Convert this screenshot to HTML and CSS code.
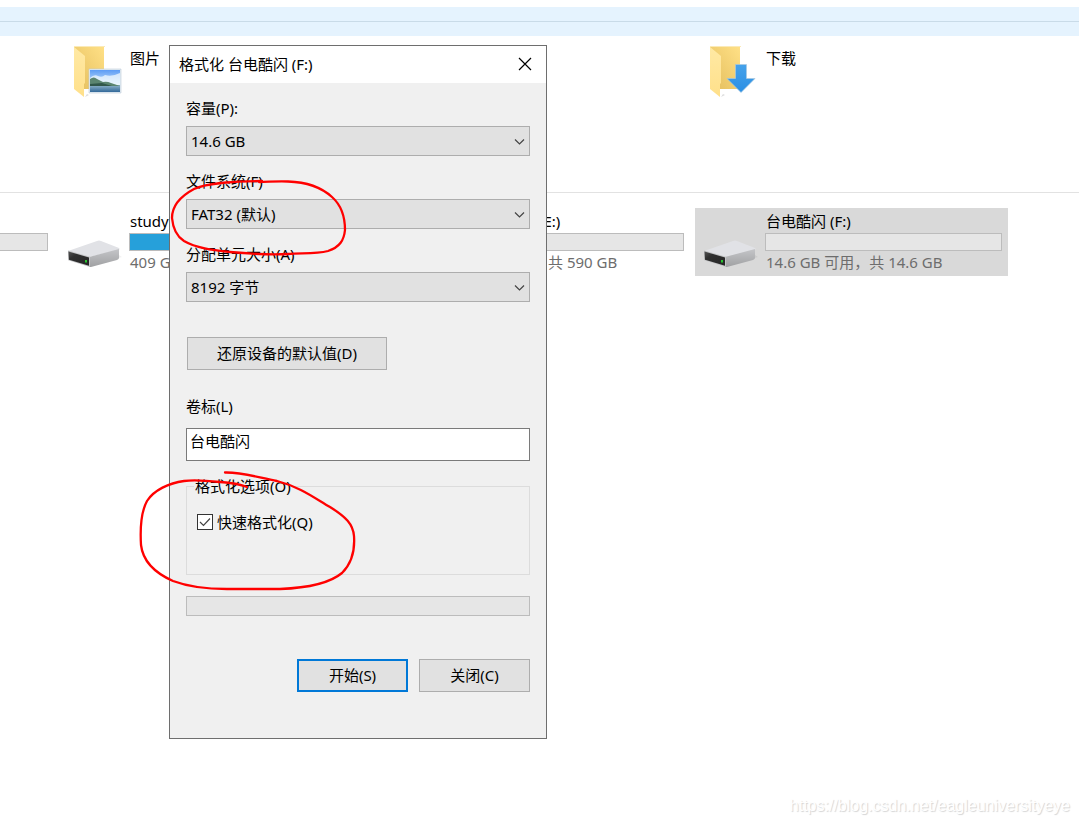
FILE: index.html
```html
<!DOCTYPE html>
<html lang="zh-CN">
<head>
<meta charset="utf-8">
<title>格式化 台电酷闪 (F:)</title>
<link rel="stylesheet" href="styles.css">
</head>
<body>
<svg class="defs" aria-hidden="true">
  <defs>
    <linearGradient id="folder-back" x1="0" y1="1" x2="1" y2="0"><stop offset="0" stop-color="#e3bd5c"/><stop offset="1" stop-color="#ffe086"/></linearGradient>
    <linearGradient id="folder-front" x1="0" y1="0" x2="0" y2="1"><stop offset="0" stop-color="#ffe9a4"/><stop offset="1" stop-color="#ffe08a"/></linearGradient>
    <linearGradient id="sky" x1="0" y1="0" x2="0" y2="1"><stop offset="0" stop-color="#5c9cf5"/><stop offset="1" stop-color="#d9eefb"/></linearGradient>
    <linearGradient id="sea" x1="0" y1="0" x2="0" y2="1"><stop offset="0" stop-color="#8fb4c8"/><stop offset="1" stop-color="#34699a"/></linearGradient>
    <linearGradient id="arrow" x1="0" y1="0" x2="0" y2="1"><stop offset="0" stop-color="#46a2ea"/><stop offset="1" stop-color="#2b8fe4"/></linearGradient>
    <linearGradient id="drive-side" x1="0" y1="0" x2="0" y2="1"><stop offset="0" stop-color="#c4c5c8"/><stop offset="1" stop-color="#a0a1a3"/></linearGradient>
    <linearGradient id="drive-front" x1="0" y1="0" x2="1" y2="1"><stop offset="0" stop-color="#555"/><stop offset=".3" stop-color="#303030"/><stop offset="1" stop-color="#262626"/></linearGradient>
    <symbol id="folder" viewBox="0 0 56 56">
      <path d="M14 53l4-2-2-1z" fill="#ddd"/>
      <path d="M3 3h30v42H11z" fill="url(#folder-back)"/>
      <path d="M3 2h31v1H3z" fill="#fbeab8"/>
      <path d="M3 3l11 9v27l-1 1v13L3 45z" fill="url(#folder-front)"/>
    </symbol>
    <symbol id="drive" viewBox="0 0 56 56">
      <path d="M30 54l26-8-3-2-25 8z" fill="#000" opacity=".06"/>
      <path d="M2 40l29-10q2-1 4 0l18 7q1 1 0 2L23 46z" fill="#e1e2e6"/>
      <path d="M23 46l30-8v9q0 1-2 2l-26 7h-2z" fill="url(#drive-side)"/>
      <path d="M2 39.500l22 6.200V56L3 49.500q-1 0-1-1z" fill="#c3c4c6"/>
      <path d="M2.500 40.500L23 46.500v8.200L3 48.700z" fill="url(#drive-front)"/>
      <path d="M19 49h2v2.500h-2z" fill="#27c52f"/>
    </symbol>
  </defs>
</svg>

<main class="explorer">
  <div class="group-band"></div>
  <section class="tiles tiles-folders">
    <div class="tile tile-pictures">
      <svg class="tile-icon" viewBox="0 0 56 56" aria-hidden="true">
        <use href="#folder"/>
        <path d="M18 25h32v24H18z" fill="#e3edf4" stroke="#bccbd6" stroke-width=".6"/>
        <path d="M19 26h30v16H19z" fill="url(#sky)"/>
        <path d="M19 34q4-4 8-2t7-1q7 2 15-2v13H19z" fill="#f2f9fd" opacity=".75"/>
        <path d="M19 41h30v7H19z" fill="url(#sea)"/>
        <path d="M19 35q4-3 7 0l6 3q4-1 8 1l9 3H19z" fill="#5b8570"/>
        <path d="M19 40l12-1 10 3H19z" fill="#31574a"/>
      </svg>
      <div class="tile-text"><span class="tile-name">图片</span></div>
    </div>
    <div class="tile tile-downloads">
      <svg class="tile-icon" viewBox="0 0 56 56" aria-hidden="true">
        <use href="#folder"/>
        <path d="M28.500 20.500h11v14h8.500L34 48.500 20 34.500h8.500z" fill="url(#arrow)" stroke="#a9c9df" stroke-width=".7"/>
      </svg>
      <div class="tile-text"><span class="tile-name">下载</span></div>
    </div>
  </section>
  <section class="tiles tiles-drives">
    <div class="tile tile-edge"><div class="tile-text"><progress class="usage" value="0" max="100" aria-label="已用空间"></progress></div></div>
    <div class="tile">
      <svg class="tile-icon" aria-hidden="true"><use href="#drive"/></svg>
      <div class="tile-text">
        <span class="tile-name">study</span>
        <progress class="usage" value="50" max="100" aria-label="study"></progress>
        <span class="tile-info">409 GB</span>
      </div>
    </div>
    <div class="tile tile-covered">
      <div class="tile-text">
        <span class="tile-name">(E:)</span>
        <progress class="usage" value="0" max="100" aria-label="E:"></progress>
        <span class="tile-info">共 590 GB</span>
      </div>
    </div>
    <div class="tile tile-selected">
      <svg class="tile-icon" aria-hidden="true"><use href="#drive"/></svg>
      <div class="tile-text">
        <span class="tile-name">台电酷闪 (F:)</span>
        <progress class="usage" value="0" max="100" aria-label="台电酷闪 (F:)"></progress>
        <span class="tile-info">14.6 GB 可用，共 14.6 GB</span>
      </div>
    </div>
  </section>
</main>

<form class="dialog" role="dialog" aria-labelledby="dialog-title">
  <header class="titlebar">
    <h1 class="title" id="dialog-title">格式化 台电酷闪 (F:)</h1>
    <button class="close" type="button" aria-label="关闭"><svg width="14" height="14" viewBox="0 0 14 14"><path d="M1 1l12 12M13 1L1 13" stroke="#000" stroke-width="1.200"/></svg></button>
  </header>
  <div class="dialog-body">
    <div class="fields">
      <div class="field">
        <label for="capacity">容量(P):</label>
        <div class="combo"><select id="capacity"><option>14.6 GB</option></select><svg class="chevron" viewBox="0 0 11 6"><path d="M1 .5L5.500 5 10 .5"/></svg></div>
      </div>
      <div class="field">
        <label for="filesystem">文件系统(F)</label>
        <div class="combo"><select id="filesystem"><option>FAT32 (默认)</option></select><svg class="chevron" viewBox="0 0 11 6"><path d="M1 .5L5.500 5 10 .5"/></svg></div>
      </div>
      <div class="field">
        <label for="allocation">分配单元大小(A)</label>
        <div class="combo"><select id="allocation"><option>8192 字节</option></select><svg class="chevron" viewBox="0 0 11 6"><path d="M1 .5L5.500 5 10 .5"/></svg></div>
      </div>
    </div>
    <button class="button restore" type="button">还原设备的默认值(D)</button>
    <div class="field field-volume">
      <label for="volume">卷标(L)</label>
      <input class="textbox" id="volume" type="text" value="台电酷闪">
    </div>
    <fieldset class="options">
      <legend>格式化选项(O)</legend>
      <label class="check">
        <span class="check-box"><input type="checkbox" checked><svg class="tick" viewBox="0 0 16 16"><path d="M3 8l3.500 3.500L13 4.500"/></svg></span>快速格式化(Q)
      </label>
    </fieldset>
    <progress class="format-progress" value="0" max="100" aria-label="格式化进度"></progress>
    <div class="actions">
      <button class="button button-default" type="button">开始(S)</button>
      <button class="button" type="button">关闭(C)</button>
    </div>
  </div>
</form>

<svg class="ink" width="380" height="600" viewBox="0 0 380 600" aria-hidden="true">
  <path d="M262 181C238 181 206 183 194 189C181 196 172 206 172 218C173 229 176 236 184 241C196 248 212 250 230 252C252 254 272 255 288 254C304 253 316 254 328 251C340 247 344 240 345 230C345 216 341 205 332 197C321 187 305 182 288 181.500C276 181 268 182 259 182"/>
  <path d="M225 472.500C243 472 260 478 277 481C300 487 313 497 330 507C346 517 353 524 354 536C355 550 352 563 342 573C330 583 306 588 280 589H227C205 589 189 587 173 581C155 573 143 562 141 545C140 528 141 512 147 501C154 490 169 483 184 481C200 479 217 482 230 483C237 484 242 485 247 487"/>
</svg>
<div class="watermark">https://blog.csdn.net/eagleuniversityeye</div>
</body>
</html>
```

FILE: styles.css
```css
* { box-sizing: border-box; }

body {
  position: relative;
  margin: 0;
  min-height: 100vh;
  overflow: hidden;
  background: #fff;
  color: #000;
  font: 15px/20px "Noto Sans", "Noto Sans CJK SC", sans-serif;
}

button, input, select { font: inherit; color: inherit; border-radius: 0; }

.defs { position: absolute; width: 0; height: 0; }

/* Explorer */
.explorer { padding-top: 7px; }

.group-band {
  height: 29px;
  background: linear-gradient(#c9dbe8, #c9dbe8) 0 14px / 100% 1px no-repeat #e5f3fe;
}

.tiles {
  display: grid;
  grid-template-columns: repeat(4, 313px);
  column-gap: 5px;
  margin-left: -259px;
}

.tiles-folders {
  height: 157px;
  padding-top: 8px;
  border-bottom: 1px solid #e2e2e2;
}

.tiles-drives { padding-top: 15px; }

.tile {
  display: flex;
  height: 68px;
  padding: 3px 6px 3px 7px;
}

.tile-pictures { grid-column: 2; }
.tile-downloads { grid-column: 4; }
.tiles-folders .tile { padding: 0 6px 0 12px; }
.tiles-folders .tile-text { padding-top: 4px; }
.tile-selected { background: #d9d9d9; }
.tile-edge .tile-text { padding-top: 20px; }
.tile-edge, .tile-covered { justify-content: flex-end; }

.tile-icon { flex: none; width: 56px; height: 56px; margin-right: 2px; }
.tiles-drives .tile-icon { margin-right: 7px; }

.tile-text {
  display: flex;
  flex-direction: column;
  width: 237px;
}

.tile-name, .tile-info { padding-left: 1px; white-space: nowrap; }
.tile-info { color: #6d6d6d; }
.tile-covered .tile-name { padding-left: 92px; }
.tile-covered .tile-info { padding-left: 101px; }

progress {
  display: block;
  appearance: none;
  width: 100%;
  border: 1px solid #bcbcbc;
  background: #e6e6e6;
}

progress::-webkit-progress-bar { background: #e6e6e6; }
progress::-webkit-progress-value { background: #26a0da; }

.usage { height: 18px; margin: 2px 0 1px; }

/* Format dialog */
.dialog {
  position: absolute;
  top: 45px;
  left: 169px;
  width: 378px;
  border: 1px solid #6e6e6e;
  background: #f0f0f0;
}

.titlebar {
  display: flex;
  align-items: center;
  justify-content: space-between;
  height: 37px;
  padding: 0 12px 2px 9px;
  background: #fff;
}

.title { margin: 0; font-size: 15px; font-weight: 400; }

.close {
  display: flex;
  padding: 2px;
  border: 0;
  background: none;
}

.dialog-body {
  display: flex;
  flex-direction: column;
  padding: 15px 16px 46px;
}

.fields { display: flex; flex-direction: column; gap: 15px; }
.field { display: flex; flex-direction: column; gap: 8px; }
.field-volume { gap: 12px; margin-top: 26px; }

.combo { display: grid; align-items: center; }
.combo > * { grid-area: 1 / 1; }

.combo select {
  appearance: none;
  width: 100%;
  height: 30px;
  padding: 0 24px 0 4px;
  border: 1px solid #adadad;
  background: #e1e1e1;
}

.chevron {
  justify-self: end;
  width: 11px;
  height: 6px;
  margin: 2px 5px 0 0;
  pointer-events: none;
}

.chevron path, .tick path { fill: none; stroke: #444; stroke-width: 1.2; }

.button {
  min-width: 111px;
  height: 33px;
  padding: 0 29px 2px;
  border: 1px solid #adadad;
  background: #e1e1e1;
}

.button-default { border: 2px solid #0078d7; }
.restore { align-self: flex-start; margin: 35px 0 0 1px; }

.textbox {
  width: 100%;
  height: 33px;
  padding: 0 3px 8px;
  border: 1px solid #7a7a7a;
  background: #fff;
}

.options {
  height: 99px;
  margin: 15px 0 21px;
  padding: 16px 10px;
  border: 1px solid #dcdcdc;
}

.options legend { padding: 0 1px; margin-left: -3px; }

.check { display: flex; align-items: center; gap: 4px; }
.check-box { display: grid; }
.check-box > * { grid-area: 1 / 1; width: 16px; height: 16px; }

.check input {
  appearance: none;
  margin: 0;
  border: 1px solid #333;
  background: #fff;
}

.tick { pointer-events: none; }
.format-progress { height: 20px; }

.actions {
  display: flex;
  justify-content: flex-end;
  gap: 11px;
  margin-top: 43px;
}

/* Pen marks and watermark lie over everything */
.ink {
  position: absolute;
  top: 0;
  left: 0;
  pointer-events: none;
}

.ink path { fill: none; stroke: #f00; stroke-width: 2.3; stroke-linecap: round; }

.watermark {
  position: absolute;
  right: 9px;
  bottom: 8px;
  color: #fff;
  font: 16px/20px "Liberation Sans", sans-serif;
  text-shadow: 1px 1px 1px #d4d4d4;
}
```
